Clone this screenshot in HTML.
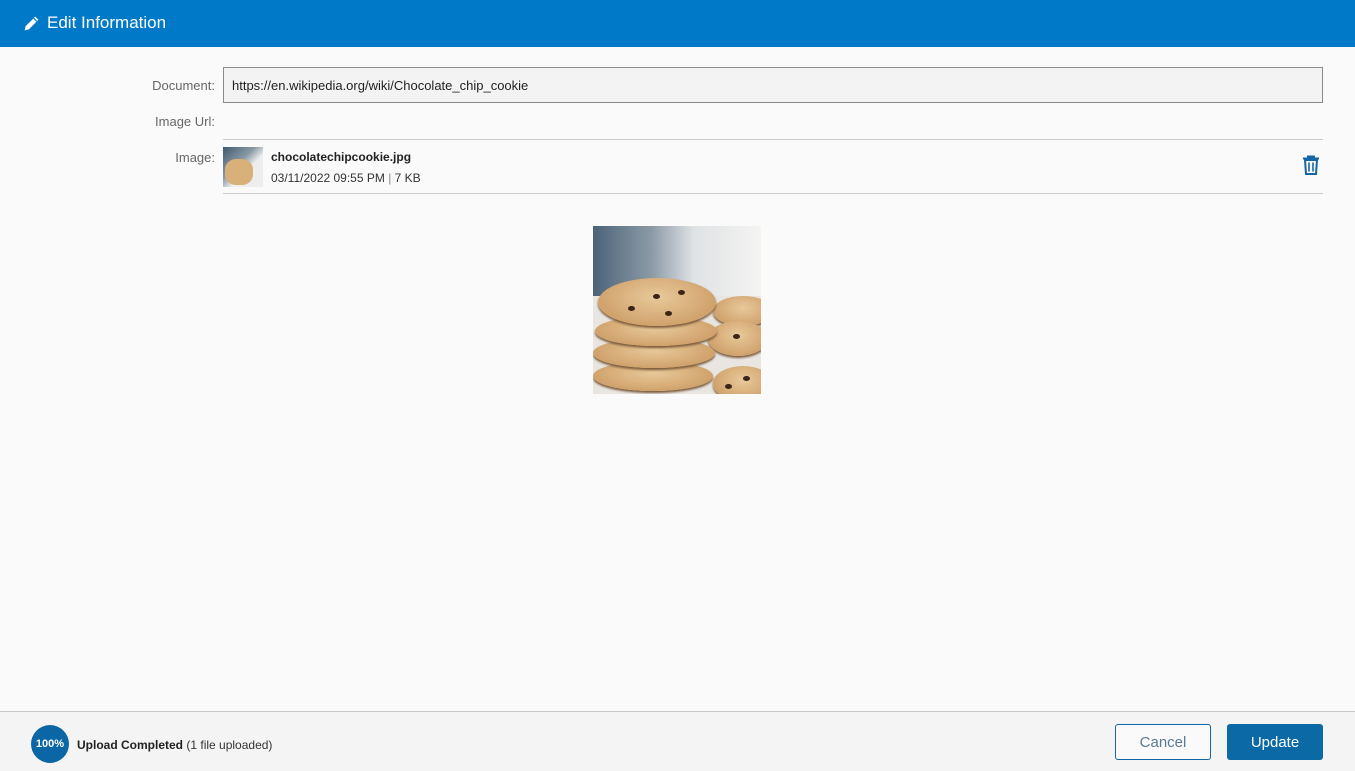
<!DOCTYPE html>
<html><head><meta charset="utf-8"><style>
*{margin:0;padding:0;box-sizing:border-box}
body{width:1355px;height:771px;background:#fafafa;font-family:"Liberation Sans",sans-serif;position:relative;overflow:hidden;color:#222}
.hdr{position:absolute;left:0;top:0;width:1355px;height:47px;background:#0079c9;color:#fff;font-size:17px}
.hdr span{position:absolute;left:47px;top:13px}
.lbl{position:absolute;right:1140px;font-size:13px;color:#666}
.inp{position:absolute;left:223px;top:67px;width:1100px;height:36px;border:1px solid #8a8a8a;background:#f3f3f3;font-size:13px;padding:10px 8px}
.hr{position:absolute;left:223px;width:1100px;height:1px;background:#ccc}
.foot{position:absolute;left:0;top:711px;width:1355px;height:60px;background:#f4f4f4;border-top:1px solid #c8c8c8}
.btn{position:absolute;top:724px;width:96px;height:36px;border-radius:3px;font-size:15px;display:flex;align-items:center;justify-content:center}
.ck{position:absolute;border-radius:50%;background:radial-gradient(ellipse at 50% 40%,#e8c99a,#c69259);box-shadow:0 2px 2px #7a5a3a}
.ch{position:absolute;width:7px;height:5px;border-radius:50%;background:#3b2418}
</style></head><body>
<div class="hdr">
<svg style="position:absolute;left:23px;top:15px" width="17" height="17" viewBox="0 0 16 16"><path d="M11.5 1.5l3 3-9 9-4 1 1-4z" fill="#fff"/><path d="M10 3l3 3" stroke="#0079c9" stroke-width="1"/></svg>
<span>Edit Information</span></div>
<div class="lbl" style="top:78px">Document:</div>
<div class="inp">https://en.wikipedia.org/wiki/Chocolate_chip_cookie</div>
<div class="lbl" style="top:114px">Image Url:</div>
<div class="hr" style="top:139px"></div>
<div class="lbl" style="top:150px">Image:</div>
<div style="position:absolute;left:223px;top:147px;width:40px;height:40px;background:linear-gradient(135deg,#3f5a70 0%,#8a9aa5 40%,#eee 60%);overflow:hidden"><div style="position:absolute;left:2px;top:12px;width:28px;height:26px;border-radius:40%;background:#d7b07a"></div></div>
<div style="position:absolute;left:271px;top:150px;font-size:12px;font-weight:bold;color:#222">chocolatechipcookie.jpg</div>
<div style="position:absolute;left:271px;top:171px;font-size:12px;color:#333">03/11/2022 09:55 PM <span style="color:#888">|</span> 7 KB</div>
<svg style="position:absolute;left:1302px;top:155px" width="18" height="20" viewBox="0 0 18 20"><path d="M6 3V1.5h6V3M1 3.5h16M3 5h12l-1 14H4z" fill="none" stroke="#1467a6" stroke-width="2"/><path d="M7 7.5v9M11 7.5v9" stroke="#1467a6" stroke-width="1.6"/></svg>
<div class="hr" style="top:193px"></div>
<div style="position:absolute;left:593px;top:226px;width:168px;height:168px;overflow:hidden;background:linear-gradient(90deg,#4b6478 0%,#8c9aa6 35%,#dfe2e4 60%,#f4f4f2 100%)">
<div style="position:absolute;left:0;top:70px;width:168px;height:98px;background:#e9e6e2"></div>
<div class="ck" style="left:120px;top:70px;width:60px;height:30px"></div>
<div class="ck" style="left:115px;top:95px;width:60px;height:35px"></div>
<div class="ck" style="left:120px;top:140px;width:60px;height:35px"></div>
<div class="ck" style="left:0px;top:135px;width:120px;height:30px"></div>
<div class="ck" style="left:0px;top:112px;width:122px;height:30px"></div>
<div class="ck" style="left:2px;top:90px;width:122px;height:30px"></div>
<div class="ck" style="left:5px;top:52px;width:118px;height:48px"></div>
<div class="ch" style="left:60px;top:68px"></div><div class="ch" style="left:35px;top:80px"></div><div class="ch" style="left:85px;top:64px"></div><div class="ch" style="left:72px;top:85px"></div><div class="ch" style="left:140px;top:108px"></div><div class="ch" style="left:132px;top:158px"></div><div class="ch" style="left:150px;top:150px"></div>
</div>
<div class="foot"></div>
<div style="position:absolute;left:31px;top:725px;width:38px;height:38px;border-radius:50%;background:#0b66a6;color:#fff;font-size:11px;font-weight:bold;text-align:center;line-height:38px">100%</div>
<div style="position:absolute;left:77px;top:738px;font-size:12px"><b style="font-weight:600">Upload Completed</b> <span style="color:#333">(1 file uploaded)</span></div>
<div class="btn" style="left:1115px;border:1px solid #1467a6;color:#5a7a95;background:#fafafa">Cancel</div>
<div class="btn" style="left:1227px;background:#0b6aa5;color:#fff">Update</div>
</body></html>
